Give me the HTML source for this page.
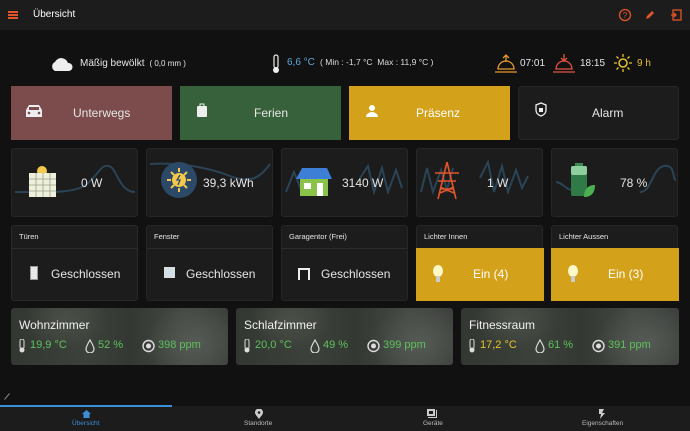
<!DOCTYPE html>
<html><head><meta charset="utf-8"><style>
*{box-sizing:border-box;margin:0;padding:0}
body{width:690px;height:431px;background:#111;font-family:"Liberation Sans",sans-serif;color:#e6e6e6;position:relative;overflow:hidden}
.a{position:absolute}
.card{position:absolute;background:#1c1c1c;border-radius:3px;border:1px solid #262626}
.t{position:absolute;white-space:nowrap}
.room{position:absolute;border-radius:3px;background:radial-gradient(ellipse 40px 30px at 25% 20%,#4a5047,transparent),radial-gradient(ellipse 50px 40px at 85% 60%,#565a55,transparent),linear-gradient(90deg,#333732 0%,#3d413b 35%,#343833 55%,#454944 80%,#3c3f3b 100%)}
.room .n{position:absolute;left:8px;top:10px;font-size:12px;color:#f0f0f0}
.room .v{position:absolute;top:31px;font-size:11px;color:#5cc15c}
.room svg{position:absolute;top:31px}
</style></head><body>
<!-- header -->
<div class="a" style="left:0;top:0;width:690px;height:30px;background:#1c1c1c"></div>
<div class="a" style="left:8px;top:11px;width:10px;height:2px;background:#e0552a;box-shadow:0 3px 0 #e0552a,0 6px 0 #e0552a"></div>
<div class="t" style="left:33px;top:9px;font-size:10px;color:#fff">Übersicht</div>
<svg class="a" style="left:618px;top:8px" width="64" height="14" viewBox="0 0 64 14"><circle cx="7" cy="7" r="5.5" fill="none" stroke="#e0552a" stroke-width="1.3"/><text x="7" y="10" font-size="8" fill="#e0552a" text-anchor="middle" font-family="Liberation Sans">?</text><path d="M28 11l1-3 5-5 2 2-5 5z" fill="#e0552a"/><rect x="55" y="2" width="8" height="10" fill="none" stroke="#e0552a" stroke-width="1.3"/><path d="M53 7h5M56 5l2 2-2 2" stroke="#e0552a" stroke-width="1.3" fill="none"/></svg>
<!-- weather -->
<svg class="a" style="left:50px;top:56px" width="24" height="16"><path d="M5 15a5 5 0 0 1 0-9 7 7 0 0 1 13 1 4 4 0 0 1 1 8z" fill="#eee"/></svg>
<div class="t" style="left:80px;top:58px;font-size:10px">Mäßig bewölkt <span style="font-size:8px">&nbsp;( 0,0 mm )</span></div>
<svg class="a" style="left:271px;top:54px" width="10" height="20"><rect x="3" y="1" width="4" height="13" rx="2" fill="none" stroke="#eee" stroke-width="1.2"/><circle cx="5" cy="16" r="3" fill="#eee"/></svg>
<div class="t" style="left:287px;top:57px;font-size:10px;color:#5fa5d8">6,6 °C <span style="color:#ddd;font-size:8.5px">&nbsp;( Min : -1,7 °C &nbsp;Max : 11,9 °C )</span></div>
<svg class="a" style="left:495px;top:53px" width="22" height="20"><path d="M3 16a8 8 0 0 1 16 0zM0 19h22M11 2v7M8 5l3-3 3 3" stroke="#e89a2e" fill="none" stroke-width="1.3"/></svg>
<div class="t" style="left:520px;top:58px;font-size:10px">07:01</div>
<svg class="a" style="left:553px;top:53px" width="22" height="20"><path d="M3 16a8 8 0 0 1 16 0zM0 19h22M11 1v7M8 5l3 3 3-3" stroke="#e05540" fill="none" stroke-width="1.3"/></svg>
<div class="t" style="left:580px;top:58px;font-size:10px">18:15</div>
<svg class="a" style="left:613px;top:53px" width="20" height="20"><circle cx="10" cy="10" r="4" fill="none" stroke="#e8c22e" stroke-width="1.5"/><path d="M10 1v3M10 16v3M1 10h3M16 10h3M3.5 3.5l2 2M14.5 14.5l2 2M3.5 16.5l2-2M14.5 5.5l2-2" stroke="#e8c22e" stroke-width="1.3"/></svg>
<div class="t" style="left:637px;top:58px;font-size:10px;color:#e8c22e">9 h</div>
<!-- mode buttons -->
<div class="a" style="left:11px;top:86px;width:161px;height:54px;background:#7c4b4c"></div>
<svg class="a" style="left:24px;top:104px" width="20" height="14"><path d="M2 6l3-5h10l3 5v7H2z" fill="#eee"/><rect x="5" y="3" width="10" height="3" fill="#7c4b4c"/><circle cx="5" cy="9" r="1.3" fill="#7c4b4c"/><circle cx="15" cy="9" r="1.3" fill="#7c4b4c"/></svg>
<div class="t" style="left:73px;top:106px;font-size:12px">Unterwegs</div>
<div class="a" style="left:180px;top:86px;width:161px;height:54px;background:#37613a"></div>
<svg class="a" style="left:196px;top:102px" width="12" height="16"><rect x="1" y="4" width="10" height="11" rx="1" fill="#eee"/><path d="M4 5V2h4v3" stroke="#eee" fill="none"/></svg>
<div class="t" style="left:254px;top:106px;font-size:12px">Ferien</div>
<div class="a" style="left:349px;top:86px;width:161px;height:54px;background:#d4a11b"></div>
<svg class="a" style="left:366px;top:104px" width="12" height="14"><circle cx="6" cy="4" r="3" fill="#fff"/><path d="M0 13a6 5 0 0 1 12 0z" fill="#fff"/></svg>
<div class="t" style="left:416px;top:106px;font-size:12px;color:#fff">Präsenz</div>
<div class="card" style="left:518px;top:86px;width:161px;height:54px"></div>
<svg class="a" style="left:535px;top:102px" width="12" height="15"><path d="M6 1l5 2v5c0 3-2 5-5 6-3-1-5-3-5-6V3z" fill="none" stroke="#eee" stroke-width="1.3"/><rect x="4" y="6" width="4" height="4" fill="#eee"/></svg>
<div class="t" style="left:592px;top:106px;font-size:12px">Alarm</div>
<!-- energy cards -->
<div class="card" style="left:11px;top:148px;width:127px;height:69px"></div>
<div class="card" style="left:146px;top:148px;width:127px;height:69px"></div>
<div class="card" style="left:281px;top:148px;width:127px;height:69px"></div>
<div class="card" style="left:416px;top:148px;width:127px;height:69px"></div>
<div class="card" style="left:551px;top:148px;width:127px;height:69px"></div>
<svg class="a" style="left:0;top:148px" width="690" height="69" fill="none" stroke="#2a4456" stroke-width="2">
<path d="M15 44c30 0 60 2 72-8s14-20 22-18 10 26 26 26"/>
<path d="M150 16c30-2 60 4 80 12s30 2 40-12"/>
<path d="M286 44l8-20 8 20 8-22 8 22M360 30l8-12 6 26 8-24 6 24 8-22 6 18"/>
<path d="M421 44l6-24 6 24 8-22 6 20 6-22M480 30l8-16 6 30 8-26 6 26 8-22 6 18 6-12"/>
<path d="M556 34c6 0 10 8 16 8M640 44c12 0 12-24 24-26s8 14 12 14"/>
</svg>
<svg class="a" style="left:26px;top:164px" width="34" height="34"><circle cx="16" cy="7" r="5" fill="#f2c94c"/><rect x="3" y="9" width="27" height="24" fill="#eef0dc"/><path d="M3 15h27M3 21h27M3 27h27M10 9v24M17 9v24M24 9v24" stroke="#9aa08a" stroke-width=".8"/></svg>
<div class="t" style="left:81px;top:176px;font-size:12px">0 W</div>
<svg class="a" style="left:161px;top:162px" width="36" height="36"><circle cx="18" cy="18" r="18" fill="#2c4a68"/><circle cx="18" cy="18" r="7" fill="#f2c94c"/><path d="M18 6v4M18 26v4M6 18h4M26 18h4M10 10l3 3M26 26l-3-3M10 26l3-3M26 10l-3 3" stroke="#f2c94c" stroke-width="2"/><path d="M19 13l-3 5h3l-2 5" stroke="#2c4a68" fill="none" stroke-width="1.3"/></svg>
<div class="t" style="left:203px;top:176px;font-size:12px">39,3 kWh</div>
<svg class="a" style="left:296px;top:167px" width="36" height="30"><path d="M0 12L6 1h25l5 11z" fill="#3d7ed6"/><rect x="4" y="12" width="28" height="17" fill="#8bc34a"/><rect x="8" y="16" width="7" height="6" fill="#fff"/><rect x="21" y="16" width="6" height="13" fill="#fff"/></svg>
<div class="t" style="left:342px;top:176px;font-size:12px">3140 W</div>
<svg class="a" style="left:432px;top:161px" width="30" height="40"><path d="M15 1L6 38M15 1l9 37M3 12h24M6 20h18M9 28h12M8 32l14-6M8 26l14 6" stroke="#e0552a" stroke-width="1.6" fill="none"/></svg>
<div class="t" style="left:487px;top:176px;font-size:12px">1 W</div>
<svg class="a" style="left:570px;top:163px" width="26" height="36"><rect x="5" y="0" width="8" height="3" fill="#3e8a55"/><rect x="1" y="3" width="16" height="30" rx="2" fill="#2f7a47"/><rect x="1" y="3" width="16" height="9" rx="2" fill="#8fcf9d"/><path d="M14 34c0-8 4-12 11-12 0 8-4 12-11 12z" fill="#4caf50"/></svg>
<div class="t" style="left:620px;top:176px;font-size:12px">78 %</div>
<!-- status cards -->
<div class="card" style="left:11px;top:225px;width:127px;height:76px;border-color:#2a2a2a"><div class="a" style="left:0;top:22px;width:100%;border-top:1px solid #2c2c2c"></div></div>
<div class="card" style="left:146px;top:225px;width:127px;height:76px"><div class="a" style="left:0;top:22px;width:100%;border-top:1px solid #2c2c2c"></div></div>
<div class="card" style="left:281px;top:225px;width:127px;height:76px"><div class="a" style="left:0;top:22px;width:100%;border-top:1px solid #2c2c2c"></div></div>
<div class="card" style="left:416px;top:225px;width:127px;height:76px"></div>
<div class="a" style="left:416px;top:248px;width:128px;height:53px;background:#d4a11b"></div>
<div class="card" style="left:551px;top:225px;width:127px;height:76px"></div>
<div class="a" style="left:551px;top:248px;width:128px;height:53px;background:#d4a11b"></div>
<div class="t" style="left:19px;top:232px;font-size:7.5px">Türen</div>
<div class="t" style="left:154px;top:232px;font-size:7.5px">Fenster</div>
<div class="t" style="left:289px;top:232px;font-size:7.5px">Garagentor (Frei)</div>
<div class="t" style="left:424px;top:232px;font-size:7.5px">Lichter Innen</div>
<div class="t" style="left:559px;top:232px;font-size:7.5px">Lichter Aussen</div>
<div class="a" style="left:30px;top:266px;width:8px;height:14px;background:#e8e8e8;border:1px solid #999"></div>
<div class="t" style="left:51px;top:267px;font-size:12px">Geschlossen</div>
<div class="a" style="left:164px;top:267px;width:11px;height:11px;background:#cfe0ea;border:2px solid #ddd"></div>
<div class="t" style="left:186px;top:267px;font-size:12px">Geschlossen</div>
<div class="a" style="left:298px;top:268px;width:12px;height:12px;border:2px solid #eee;border-bottom:none"></div>
<div class="t" style="left:321px;top:267px;font-size:12px">Geschlossen</div>
<svg class="a" style="left:433px;top:265px" width="10" height="18"><ellipse cx="5" cy="6" rx="5" ry="6" fill="#fff8c8"/><rect x="3" y="11" width="4" height="6" fill="#ccc"/></svg>
<div class="t" style="left:473px;top:267px;font-size:12px;color:#fff">Ein (4)</div>
<svg class="a" style="left:568px;top:265px" width="10" height="18"><ellipse cx="5" cy="6" rx="5" ry="6" fill="#fff8c8"/><rect x="3" y="11" width="4" height="6" fill="#ccc"/></svg>
<div class="t" style="left:608px;top:267px;font-size:12px;color:#fff">Ein (3)</div>
<!-- rooms -->
<div class="room" style="left:11px;top:308px;width:217px;height:57px"><div class="n">Wohnzimmer</div>
<svg style="left:7px" width="8" height="14"><rect x="2" y="0" width="4" height="10" rx="2" fill="none" stroke="#ddd"/><circle cx="4" cy="11" r="2.5" fill="#ddd"/></svg><div class="v" style="left:19px">19,9 °C</div>
<svg style="left:74px" width="10" height="14"><path d="M5 1C2 6 1 8 1 10a4 4 0 0 0 8 0c0-2-1-4-4-9z" fill="none" stroke="#ddd" stroke-width="1.2"/></svg><div class="v" style="left:87px">52 %</div>
<svg style="left:131px" width="13" height="14"><circle cx="6.5" cy="7" r="5.5" fill="none" stroke="#ddd" stroke-width="1.4"/><circle cx="6.5" cy="7" r="2.5" fill="#ddd"/></svg><div class="v" style="left:147px">398 ppm</div></div>
<div class="room" style="left:236px;top:308px;width:217px;height:57px"><div class="n">Schlafzimmer</div>
<svg style="left:7px" width="8" height="14"><rect x="2" y="0" width="4" height="10" rx="2" fill="none" stroke="#ddd"/><circle cx="4" cy="11" r="2.5" fill="#ddd"/></svg><div class="v" style="left:19px">20,0 °C</div>
<svg style="left:74px" width="10" height="14"><path d="M5 1C2 6 1 8 1 10a4 4 0 0 0 8 0c0-2-1-4-4-9z" fill="none" stroke="#ddd" stroke-width="1.2"/></svg><div class="v" style="left:87px">49 %</div>
<svg style="left:131px" width="13" height="14"><circle cx="6.5" cy="7" r="5.5" fill="none" stroke="#ddd" stroke-width="1.4"/><circle cx="6.5" cy="7" r="2.5" fill="#ddd"/></svg><div class="v" style="left:147px">399 ppm</div></div>
<div class="room" style="left:461px;top:308px;width:218px;height:57px"><div class="n">Fitnessraum</div>
<svg style="left:7px" width="8" height="14"><rect x="2" y="0" width="4" height="10" rx="2" fill="none" stroke="#ddd"/><circle cx="4" cy="11" r="2.5" fill="#ddd"/></svg><div class="v" style="left:19px;color:#e8c22e">17,2 °C</div>
<svg style="left:74px" width="10" height="14"><path d="M5 1C2 6 1 8 1 10a4 4 0 0 0 8 0c0-2-1-4-4-9z" fill="none" stroke="#ddd" stroke-width="1.2"/></svg><div class="v" style="left:87px">61 %</div>
<svg style="left:131px" width="13" height="14"><circle cx="6.5" cy="7" r="5.5" fill="none" stroke="#ddd" stroke-width="1.4"/><circle cx="6.5" cy="7" r="2.5" fill="#ddd"/></svg><div class="v" style="left:147px">391 ppm</div></div>
<!-- bottom -->
<div class="a" style="left:3px;top:396px;width:8px;height:1px;background:#888;transform:rotate(-50deg)"></div>
<div class="a" style="left:0;top:406px;width:690px;height:25px;background:#1c1c1c"></div>
<div class="a" style="left:0;top:405px;width:172px;height:2px;background:#3b8fd6"></div>
<svg class="a" style="left:82px;top:410px" width="9" height="8"><path d="M4.5 0L9 4H7.5v4h-6V4H0z" fill="#3b8fd6"/></svg>
<div class="t" style="left:72px;top:420px;font-size:6.5px;color:#3b8fd6">Übersicht</div>
<svg class="a" style="left:255px;top:409px" width="8" height="10"><path d="M4 10C1 6 0 5 0 3.5a4 4 0 0 1 8 0C8 5 7 6 4 10z" fill="#ccc"/><circle cx="4" cy="3.5" r="1.3" fill="#1c1c1c"/></svg>
<div class="t" style="left:244px;top:420px;font-size:6.5px;color:#bbb">Standorte</div>
<svg class="a" style="left:427px;top:409px" width="10" height="9"><rect x="0" y="0" width="8" height="7" fill="#ccc"/><rect x="2" y="2" width="4" height="3" fill="#1c1c1c"/><path d="M1 8.5h8.5V1" stroke="#ccc" fill="none"/></svg>
<div class="t" style="left:423px;top:420px;font-size:6.5px;color:#bbb">Geräte</div>
<svg class="a" style="left:599px;top:409px" width="6" height="10"><path d="M0 0h5L3 4h3L1 10l1-5H0z" fill="#ccc"/></svg>
<div class="t" style="left:582px;top:420px;font-size:6.5px;color:#bbb">Eigenschaften</div>
</body></html>
